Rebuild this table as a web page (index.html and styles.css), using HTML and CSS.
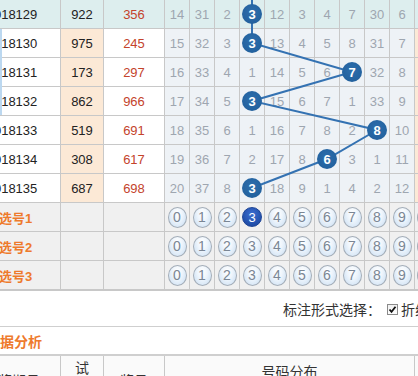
FILE: index.html
```html
<!DOCTYPE html>
<html lang="zh-CN">
<head>
<meta charset="utf-8">
<title>走势图</title>
<link rel="stylesheet" href="styles.css">
</head>
<body>
<div class="page">
  <div class="chart">
    <svg class="trend" width="520" height="203" viewBox="0 0 520 203">
      <polyline points="288,-15 288,14 288,43 388,72 288,101 413,130 363,159 288,188"/>
    </svg>
    <div class="edge-mark"></div>

    <div class="row first">
      <div class="period">2018129</div><div class="test">922</div><div class="draw">356</div>
      <div class="n">14</div><div class="n">31</div><div class="n">2</div><div class="n"><span class="ball">3</span></div><div class="n">12</div><div class="n">3</div><div class="n">4</div><div class="n">7</div><div class="n">30</div><div class="n">6</div>
      <div class="x"></div>
    </div>
    <div class="row">
      <div class="period">2018130</div><div class="test">975</div><div class="draw">245</div>
      <div class="n">15</div><div class="n">32</div><div class="n">3</div><div class="n"><span class="ball">3</span></div><div class="n">13</div><div class="n">4</div><div class="n">5</div><div class="n">8</div><div class="n">31</div><div class="n">7</div>
      <div class="x"></div>
    </div>
    <div class="row">
      <div class="period">2018131</div><div class="test">173</div><div class="draw">297</div>
      <div class="n">16</div><div class="n">33</div><div class="n">4</div><div class="n">1</div><div class="n">14</div><div class="n">5</div><div class="n">6</div><div class="n"><span class="ball">7</span></div><div class="n">32</div><div class="n">8</div>
      <div class="x"></div>
    </div>
    <div class="row">
      <div class="period">2018132</div><div class="test">862</div><div class="draw">966</div>
      <div class="n">17</div><div class="n">34</div><div class="n">5</div><div class="n"><span class="ball">3</span></div><div class="n">15</div><div class="n">6</div><div class="n">7</div><div class="n">1</div><div class="n">33</div><div class="n">9</div>
      <div class="x"></div>
    </div>
    <div class="row">
      <div class="period">2018133</div><div class="test">519</div><div class="draw">691</div>
      <div class="n">18</div><div class="n">35</div><div class="n">6</div><div class="n">1</div><div class="n">16</div><div class="n">7</div><div class="n">8</div><div class="n">2</div><div class="n"><span class="ball">8</span></div><div class="n">10</div>
      <div class="x"></div>
    </div>
    <div class="row">
      <div class="period">2018134</div><div class="test">308</div><div class="draw">617</div>
      <div class="n">19</div><div class="n">36</div><div class="n">7</div><div class="n">2</div><div class="n">17</div><div class="n">8</div><div class="n"><span class="ball">6</span></div><div class="n">3</div><div class="n">1</div><div class="n">11</div>
      <div class="x"></div>
    </div>
    <div class="row">
      <div class="period">2018135</div><div class="test">687</div><div class="draw">698</div>
      <div class="n">20</div><div class="n">37</div><div class="n">8</div><div class="n"><span class="ball">3</span></div><div class="n">18</div><div class="n">9</div><div class="n">1</div><div class="n">4</div><div class="n">2</div><div class="n">12</div>
      <div class="x"></div>
    </div>
  </div>

  <div class="row pick">
    <div class="label">选号1</div><div class="test"></div><div class="draw"></div>
    <div class="n"><span class="opt">0</span></div><div class="n"><span class="opt">1</span></div><div class="n"><span class="opt">2</span></div><div class="n"><span class="opt on">3</span></div><div class="n"><span class="opt">4</span></div><div class="n"><span class="opt">5</span></div><div class="n"><span class="opt">6</span></div><div class="n"><span class="opt">7</span></div><div class="n"><span class="opt">8</span></div><div class="n"><span class="opt">9</span></div>
    <div class="x"><span class="opt">0</span></div>
  </div>
  <div class="row pick">
    <div class="label">选号2</div><div class="test"></div><div class="draw"></div>
    <div class="n"><span class="opt">0</span></div><div class="n"><span class="opt">1</span></div><div class="n"><span class="opt">2</span></div><div class="n"><span class="opt">3</span></div><div class="n"><span class="opt">4</span></div><div class="n"><span class="opt">5</span></div><div class="n"><span class="opt">6</span></div><div class="n"><span class="opt">7</span></div><div class="n"><span class="opt">8</span></div><div class="n"><span class="opt">9</span></div>
    <div class="x"><span class="opt">0</span></div>
  </div>
  <div class="row pick last">
    <div class="label">选号3</div><div class="test"></div><div class="draw"></div>
    <div class="n"><span class="opt">0</span></div><div class="n"><span class="opt">1</span></div><div class="n"><span class="opt">2</span></div><div class="n"><span class="opt">3</span></div><div class="n"><span class="opt">4</span></div><div class="n"><span class="opt">5</span></div><div class="n"><span class="opt">6</span></div><div class="n"><span class="opt">7</span></div><div class="n"><span class="opt">8</span></div><div class="n"><span class="opt">9</span></div>
    <div class="x"><span class="opt">0</span></div>
  </div>

  <div class="options">
    <span class="opt-label">标注形式选择：</span>
    <span class="check"><svg width="9" height="9" viewBox="0 0 9 9"><path d="M1.5 4.5 L3.5 6.8 L7.5 1.8" fill="none" stroke="#111" stroke-width="1.8"/></svg></span>
    <span class="opt-label">折线</span>
  </div>

  <div class="section-title">数据分析</div>

  <div class="thead">
    <div class="h hp">开奖期号</div>
    <div class="h ht">试<br>机<br>号</div>
    <div class="h hd">奖号</div>
    <div class="h hn"><div class="hn-top">号码分布</div></div>
    <div class="h hx"></div>
  </div>
</div>
</body>
</html>
```

FILE: styles.css
```css
html, body {
  margin: 0;
  padding: 0;
  overflow: hidden;
  background: #fff;
}

body {
  font-family: "Liberation Sans", Arial, "Noto Sans CJK SC", sans-serif;
  font-size: 13px;
  color: #333;
}

.page {
  width: 520px;
  margin-left: -36px;
}

.chart {
  position: relative;
}

.trend {
  position: absolute;
  left: 0;
  top: 0;
  z-index: 1;
  overflow: visible;
}

.trend polyline {
  fill: none;
  stroke: #3472b2;
  stroke-width: 2;
}

.edge-mark {
  position: absolute;
  left: 36px;
  top: 29px;
  width: 2px;
  height: 86px;
  background: #bcd8f0;
  z-index: 1;
}

.row {
  display: flex;
  height: 29px;
  box-sizing: border-box;
  border-bottom: 1px solid #c8c8c8;
}

.row > div {
  flex: none;
  box-sizing: border-box;
  border-right: 1px solid #c8c8c8;
  display: flex;
  align-items: center;
  justify-content: center;
}

.period {
  width: 97px;
  color: #222;
}

.test {
  width: 43px;
  background: #fce9d6;
  color: #222;
}

.draw {
  width: 61px;
  color: #c4432b;
}

.n {
  width: 25px;
  background: #eef2f6;
  color: #9ea6b0;
}

.x {
  width: 22px;
  background: #fce9d6;
}

.row.first > div {
  background: #ddeeee;
}

.ball {
  position: relative;
  z-index: 2;
  width: 20px;
  height: 20px;
  border-radius: 50%;
  background: radial-gradient(circle at 50% 40%, #2d6eac 0%, #23629f 70%, #1d5690 100%);
  color: #fff;
  font-weight: bold;
  font-size: 13px;
  display: flex;
  align-items: center;
  justify-content: center;
}

/* pick rows */
.row.pick > div {
  background: #f0f0f0;
}

.row.pick.last {
  height: 30px;
  border-bottom-width: 2px;
}

.row.pick > .label {
  width: 97px;
  justify-content: flex-start;
  padding-left: 35px;
  color: #ee7a2c;
  font-weight: bold;
  font-size: 13px;
}

.x .opt {
  margin-left: 1px;
}

.opt {
  width: 19px;
  height: 21px;
  box-sizing: border-box;
  border: 1px solid #a3adb8;
  border-radius: 50%;
  background: radial-gradient(ellipse at 50% 30%, #ffffff 0%, #eef5fc 40%, #c6dcf2 100%);
  color: #7a8694;
  font-size: 14px;
  display: flex;
  align-items: center;
  justify-content: center;
}

.opt.on {
  width: 20px;
  height: 20px;
  border-color: #1d4496;
  background: radial-gradient(circle at 50% 35%, #3d6ed0 0%, #2453b0 60%, #1b4297 100%);
  color: #fff;
  font-size: 13px;
}

/* options bar */
.options {
  height: 36px;
  box-sizing: border-box;
  border-bottom: 1px solid #cfcfcf;
  display: flex;
  align-items: center;
  padding-left: 319px;
  font-family: "Noto Sans CJK SC", sans-serif;
  font-size: 14px;
  color: #333;
  white-space: nowrap;
}

.check {
  width: 11px;
  height: 11px;
  box-sizing: border-box;
  border: 1px solid #8a8a8a;
  background: linear-gradient(#f0f0f0, #fdfdfd);
  margin: 1px 3px 0 6px;
  display: flex;
  align-items: center;
  justify-content: center;
}

.section-title {
  height: 29px;
  box-sizing: border-box;
  border-bottom: 2px solid #cfcfcf;
  display: flex;
  align-items: center;
  padding-left: 22px;
  font-family: "Noto Sans CJK SC", sans-serif;
  font-size: 14px;
  font-weight: bold;
  color: #ee7a2c;
}

/* table head */
.thead {
  display: flex;
  height: 48px;
  background: #fafafa;
  font-family: "Noto Sans CJK SC", sans-serif;
  font-size: 14px;
  color: #333;
}

.h {
  flex: none;
  box-sizing: border-box;
  border-right: 1px solid #c8c8c8;
  display: flex;
  align-items: center;
  justify-content: center;
  text-align: center;
  line-height: 16px;
}

.hp { width: 97px; }
.ht {
  width: 43px;
  line-height: 21px;
  align-items: flex-start;
  padding-top: 1px;
}
.hd { width: 61px; }
.hn {
  width: 250px;
  flex-direction: column;
  justify-content: flex-start;
}
.hx { width: 22px; }

.hn-top {
  height: 28px;
  width: 100%;
  display: flex;
  align-items: center;
  justify-content: center;
  padding-top: 2px;
  box-sizing: border-box;
}
```
